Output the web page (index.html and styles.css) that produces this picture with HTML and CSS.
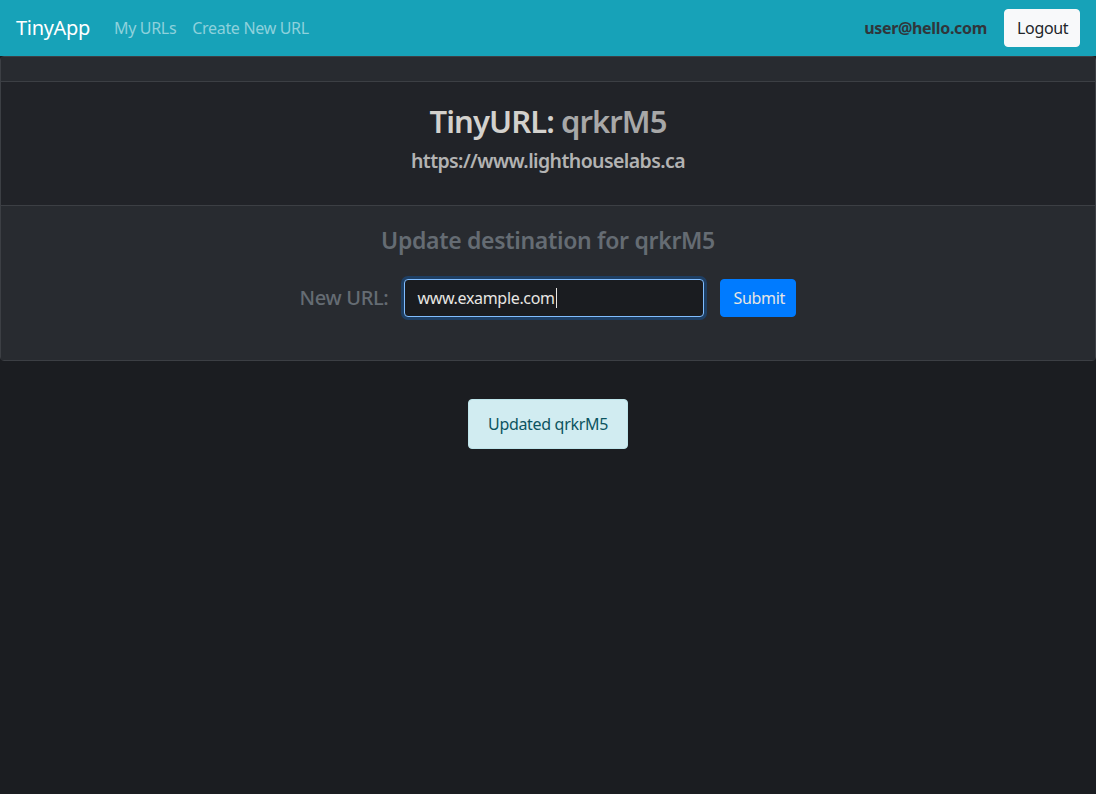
FILE: index.html
```html
<!DOCTYPE html>
<html lang="en">
<head>
<meta charset="utf-8">
<title>TinyApp</title>
<link rel="stylesheet" href="styles.css">
</head>
<body>
<nav class="navbar">
  <a class="brand" href="#">TinyApp</a>
  <div class="nav-links">
    <a class="nav-link" href="#">My URLs</a>
    <a class="nav-link" href="#">Create New URL</a>
  </div>
  <div class="nav-right">
    <span class="user">user@hello.com</span>
    <button class="btn-light">Logout</button>
  </div>
</nav>

<main>
  <section class="card">
    <div class="card-header"></div>
    <div class="card-body">
      <h2 class="tiny-title"><span class="label">TinyURL:</span> <span class="code">qrkrM5</span></h2>
      <h5 class="long-url">https://www.lighthouselabs.ca</h5>
    </div>
    <div class="card-footer">
      <h4 class="update-title">Update destination for qrkrM5</h4>
      <form class="update-form">
        <label class="form-label" for="newurl">New URL:</label>
        <div class="input-box" id="newurl"><span class="input-text">www.example.com</span><span class="caret"></span></div>
        <button type="button" class="btn-primary">Submit</button>
      </form>
    </div>
  </section>

  <div class="alert-row">
    <div class="alert">Updated qrkrM5</div>
  </div>
</main>
</body>
</html>
```

FILE: styles.css
```css
* { box-sizing: border-box; }

html, body {
  margin: 0;
  padding: 0;
}

body {
  background: #1b1d21;
  font-family: "Noto Sans", "Open Sans", sans-serif;
  font-size: 16px;
  line-height: 1.5;
  letter-spacing: -0.02em;
  color: #e8e6e3;
  min-height: 794px;
}

a { text-decoration: none; }

/* Navbar */
.navbar {
  height: 56px;
  background: #17a2b8;
  display: flex;
  align-items: center;
  padding: 8px 16px;
}

.brand {
  color: #ffffff;
  font-size: 20px;
  line-height: 30px;
  margin-right: 16px;
}

.nav-links {
  display: flex;
}

.nav-link {
  color: #8ed1dc;
  padding: 8px 8px;
}

.nav-right {
  margin-left: auto;
  display: flex;
  align-items: center;
}

.user {
  color: #30363b;
  font-weight: 700;
  margin-right: 17px;
}

.btn-light {
  font-family: inherit;
  font-size: 16px;
  letter-spacing: inherit;
  line-height: 24px;
  background: #f8f9fa;
  color: #212529;
  border: 1px solid #f8f9fa;
  border-radius: 4px;
  padding: 6px 12px;
  height: 38px;
  width: 76px;
}

/* Card */
.card {
  border: 1px solid #3c3f44;
  border-radius: 4px;
  background: #222429;
  text-align: center;
}

.card-header {
  height: 25px;
  background: #282b30;
  border-bottom: 1px solid #3c3f44;
}

.card-body {
  padding: 20px 20px 20px;
  height: 123px;
  background: #212328;
}

.tiny-title {
  margin: 0 0 5px;
  font-size: 31px;
  line-height: 39px;
  letter-spacing: -0.03em;
  font-weight: 600;
}

.tiny-title .label { color: #d3d1cd; }
.tiny-title .code { color: #a8a8a8; }

.long-url {
  margin: 0;
  font-size: 19.5px;
  line-height: 29px;
  letter-spacing: -0.03em;
  font-weight: 600;
  color: #b3b3b3;
}

.card-footer {
  background: #282b30;
  border-top: 1px solid #3c3f44;
  padding: 20px 20px 43px;
}

.update-title {
  margin: 0 0 24px;
  font-size: 23px;
  line-height: 29px;
  font-weight: 600;
  color: #656c73;
}

.update-form {
  display: flex;
  justify-content: center;
  align-items: center;
  height: 38px;
}

.form-label {
  font-size: 20px;
  font-weight: 500;
  color: #656c73;
  margin-right: 16px;
}

.input-box {
  width: 300px;
  height: 38px;
  background: #1a1c20;
  border: 1px solid #80bdff;
  border-radius: 4px;
  box-shadow: 0 0 0 3px rgba(0, 123, 255, 0.25);
  padding: 6px 12px;
  display: flex;
  align-items: center;
  text-align: left;
  margin-right: 16px;
}

.input-text {
  color: #e8e6e3;
  font-size: 16px;
  line-height: 24px;
}

.caret {
  display: inline-block;
  width: 1px;
  height: 20px;
  background: #e8e6e3;
  margin-left: 1px;
}

.btn-primary {
  font-family: inherit;
  font-size: 16px;
  letter-spacing: inherit;
  line-height: 24px;
  background: #007bff;
  color: #e8e6e3;
  border: 1px solid #007bff;
  border-radius: 4px;
  padding: 6px 12px;
  height: 38px;
  width: 76px;
}

/* Alert */
.alert-row {
  display: flex;
  justify-content: center;
  margin-top: 38px;
}

.alert {
  background: #d1ecf1;
  color: #0c5460;
  border: 1px solid #bee5eb;
  border-radius: 4px;
  padding: 12px 0;
  line-height: 24px;
  height: 50px;
  width: 160px;
  white-space: nowrap;
  text-align: center;
}
```
